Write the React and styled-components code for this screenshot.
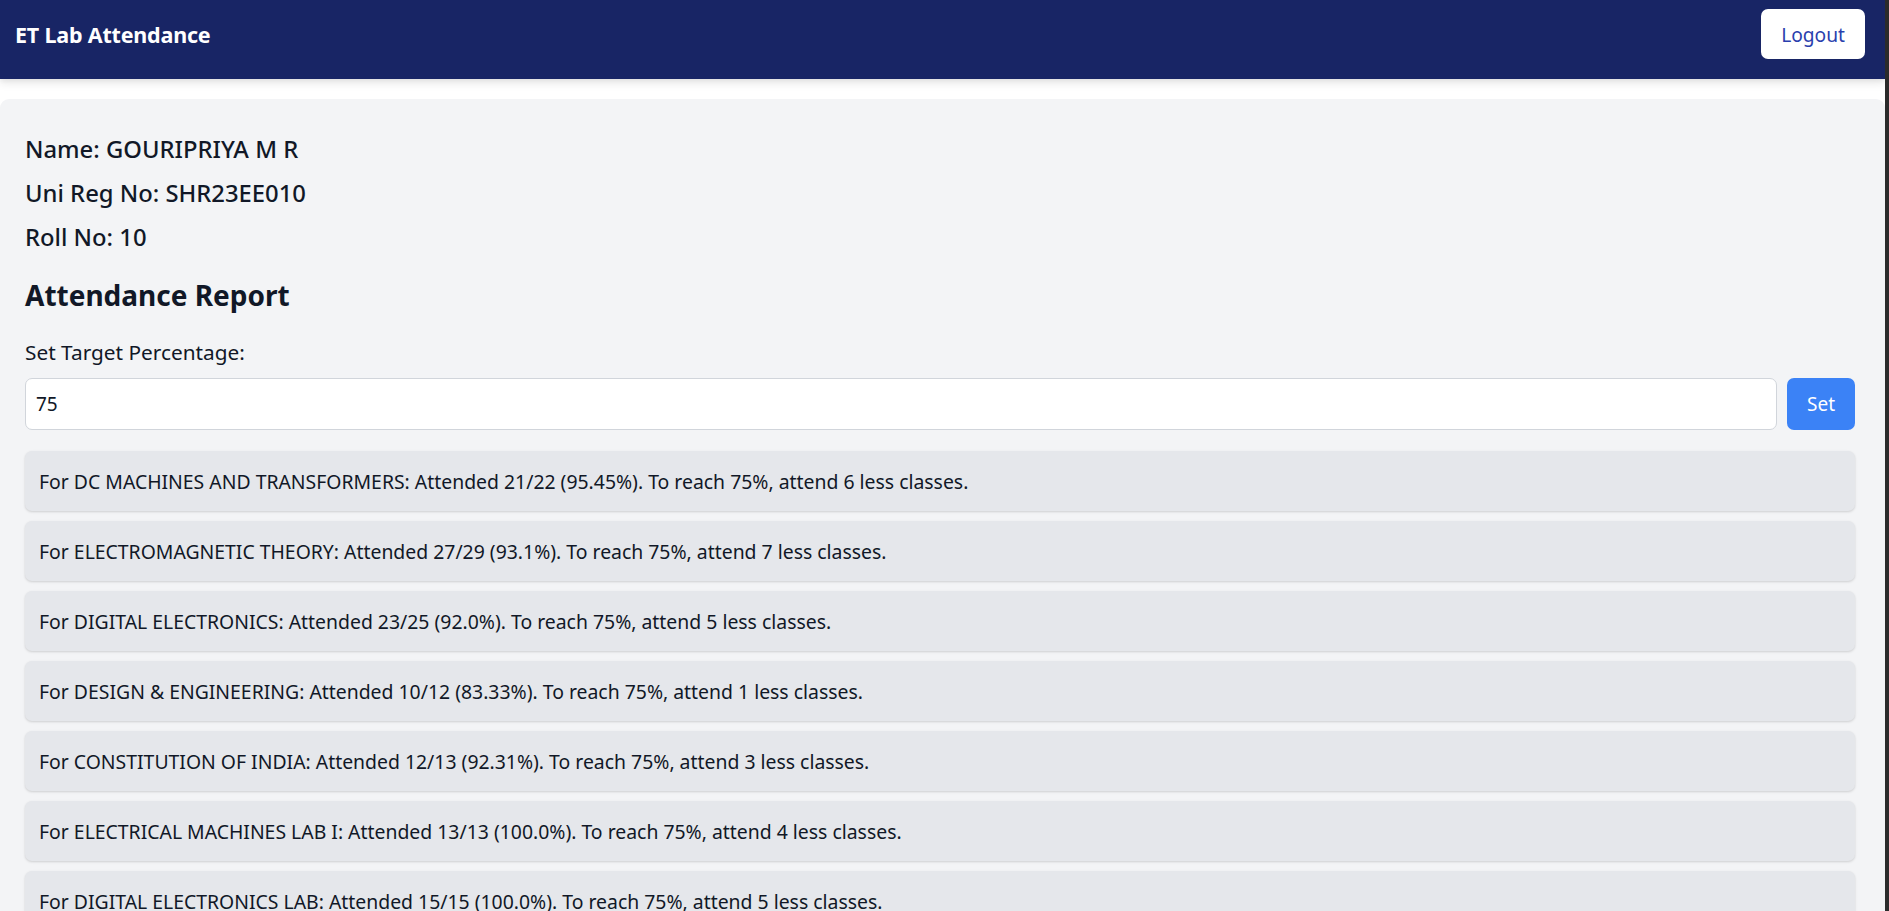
import React, { useState } from "react"
import styled, { createGlobalStyle } from "styled-components"

const subjects = [
  { name: "DC MACHINES AND TRANSFORMERS", attended: 21, total: 22, pct: "95.45" },
  { name: "ELECTROMAGNETIC THEORY", attended: 27, total: 29, pct: "93.1" },
  { name: "DIGITAL ELECTRONICS", attended: 23, total: 25, pct: "92.0" },
  { name: "DESIGN & ENGINEERING", attended: 10, total: 12, pct: "83.33" },
  { name: "CONSTITUTION OF INDIA", attended: 12, total: 13, pct: "92.31" },
  { name: "ELECTRICAL MACHINES LAB I", attended: 13, total: 13, pct: "100.0" },
  { name: "DIGITAL ELECTRONICS LAB", attended: 15, total: 15, pct: "100.0" },
]

function canMiss(attended, total, target) {
  // classes that can be skipped while staying at or above target
  let skip = 0
  while ((attended / (total + skip + 1)) * 100 >= target) skip++
  return skip
}

function App() {
  const [value, setValue] = useState("75")
  const [target, setTarget] = useState(75)

  return (
    <>
      <GlobalStyle />
      <Header>
        <Title>ET Lab Attendance</Title>
        <LogoutButton>Logout</LogoutButton>
      </Header>
      <Main>
        <InfoLine>Name: GOURIPRIYA M R</InfoLine>
        <InfoLine>Uni Reg No: SHR23EE010</InfoLine>
        <InfoLine>Roll No: 10</InfoLine>
        <Heading>Attendance Report</Heading>
        <Label htmlFor="target">Set Target Percentage:</Label>
        <TargetRow>
          <TargetInput
            id="target"
            value={value}
            onChange={(e) => setValue(e.target.value)}
          />
          <SetButton onClick={() => setTarget(Number(value) || 0)}>Set</SetButton>
        </TargetRow>
        <CardList>
          {subjects.map((s) => (
            <Card key={s.name}>
              For {s.name}: Attended {s.attended}/{s.total} ({s.pct}%). To reach{" "}
              {target}%, attend {canMiss(s.attended, s.total, target)} less classes.
            </Card>
          ))}
        </CardList>
      </Main>
    </>
  )
}

export default App

const GlobalStyle = createGlobalStyle`
  html {
    background: #2b2b2b;
    height: 100%;
    overflow: hidden;
  }
  body {
    margin: 0 4px 0 0;
    background: #ffffff;
    min-height: 100%;
    font-family: "Noto Sans", "Open Sans", sans-serif;
    color: #111827;
  }
  * {
    box-sizing: border-box;
  }
`

const Header = styled.header`
  display: flex;
  align-items: center;
  justify-content: space-between;
  height: 79px;
  padding: 9px 20px 20px 15px;
  background: #182565;
  box-shadow: 0 5px 8px rgba(0, 0, 0, 0.08), 0 2px 4px rgba(0, 0, 0, 0.05);
  position: relative;
  z-index: 1;
`

const Title = styled.h1`
  margin: 0;
  font-size: 21.5px;
  font-weight: 700;
  color: #ffffff;
  letter-spacing: -0.2px;
`

const LogoutButton = styled.button`
  height: 50px;
  padding: 0 20px;
  border: none;
  border-radius: 7px;
  background: #ffffff;
  color: #2a3fae;
  font-family: inherit;
  font-size: 19.2px;
  cursor: pointer;
`

const Main = styled.main`
  margin-top: 20px;
  padding: 33px 30px 0 25px;
  background: #f3f4f6;
  border-radius: 9px 9px 0 0;
  min-height: 812px;
`

const InfoLine = styled.p`
  margin: 0 0 9px;
  font-size: 23.8px;
  line-height: 35px;
  font-weight: 500;
  color: #111827;
`

const Heading = styled.h2`
  margin: 20px 0 22px;
  font-size: 28px;
  line-height: 40px;
  font-weight: 700;
  color: #111827;
`

const Label = styled.label`
  display: block;
  margin-bottom: 11px;
  font-size: 20.8px;
  line-height: 30px;
  color: #111827;
`

const TargetRow = styled.div`
  display: flex;
  gap: 10px;
  margin-bottom: 21px;
`

const TargetInput = styled.input`
  flex: 1;
  height: 52px;
  padding: 0 10px;
  border: 1px solid #d1d5db;
  border-radius: 7px;
  background: #ffffff;
  font-family: inherit;
  font-size: 19px;
  color: #111827;
  outline: none;
`

const SetButton = styled.button`
  height: 52px;
  padding: 0 20px;
  border: none;
  border-radius: 7px;
  background: #3b82f6;
  color: #ffffff;
  font-family: inherit;
  font-size: 19px;
  cursor: pointer;
`

const CardList = styled.div`
  display: flex;
  flex-direction: column;
  gap: 10px;
`

const Card = styled.div`
  height: 60px;
  display: flex;
  align-items: center;
  padding: 0 14px;
  background: #e5e7eb;
  border-radius: 7px;
  box-shadow: 0 1px 3px rgba(0, 0, 0, 0.1), 0 1px 2px rgba(0, 0, 0, 0.06);
  font-size: 19.4px;
  color: #111827;
`
